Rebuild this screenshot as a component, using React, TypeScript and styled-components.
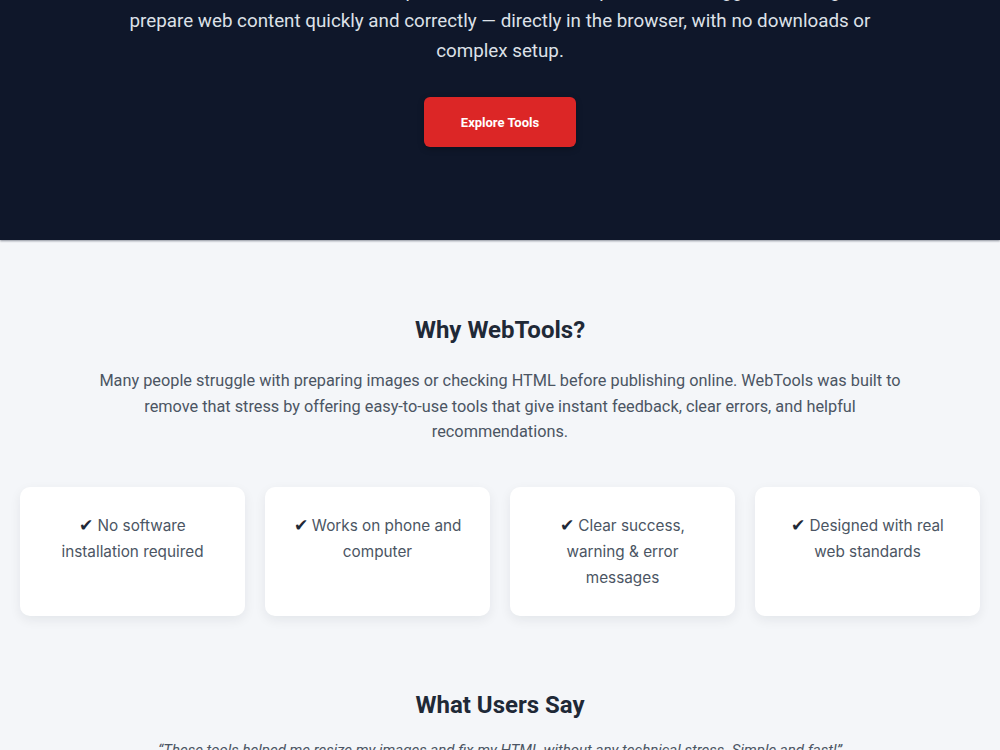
import React from "react";
import styled, { createGlobalStyle } from "styled-components";

const GlobalStyle = createGlobalStyle`
  html, body {
    margin: 0;
    padding: 0;
    background: #f4f6f9;
    font-family: Roboto, "Liberation Sans", Arial, sans-serif;
    overflow: hidden;
  }
  * { box-sizing: border-box; }
`;

const Hero = styled.header`
  background: #0f172a;
  text-align: center;
  padding: 0 20px 93px;
  box-shadow: 0 1px 2px rgba(15, 23, 42, 0.45);
  position: relative;
`;

const HeroText = styled.p`
  margin: -24px auto 31px;
  max-width: 790px;
  font-size: 18.8px;
  line-height: 30px;
  color: #dde1e8;
`;

const PrimaryButton = styled.a`
  display: inline-flex;
  align-items: center;
  justify-content: center;
  width: 152px;
  height: 50px;
  border-radius: 6px;
  background: #dc2626;
  color: #fff;
  font-size: 13px;
  font-weight: 700;
  text-decoration: none;
  box-shadow: 0 2px 6px rgba(0, 0, 0, 0.25);
`;

const Section = styled.section<{ $top: number }>`
  padding: ${(p) => p.$top}px 20px 0;
  text-align: center;
`;

const SectionTitle = styled.h2`
  margin: 0;
  font-size: 24px;
  line-height: 32px;
  font-weight: 700;
  color: #1f2937;
`;

const Lead = styled.p`
  margin: 22px auto 0;
  max-width: 830px;
  font-size: 16.3px;
  line-height: 25.5px;
  color: #4b5563;
`;

const CardGrid = styled.div`
  display: grid;
  grid-template-columns: repeat(4, 1fr);
  gap: 20px;
  margin-top: 42px;
`;

const Card = styled.div`
  background: #ffffff;
  border-radius: 10px;
  padding: 25px 24px;
  min-height: 128px;
  box-shadow: 0 4px 12px rgba(15, 23, 42, 0.07);
  font-family: Inter, Roboto, sans-serif;
  font-size: 15.3px;
  line-height: 26px;
  color: #4b5563;
`;

const Tick = styled.span`
  color: #1f2937;
  font-size: 1.08em;
`;

const Quote = styled.p`
  margin: 16px auto 0;
  max-width: 700px;
  font-size: 15px;
  line-height: 26px;
  font-style: italic;
  color: #4b5563;
`;

const features = [
  "No software installation required",
  "Works on phone and computer",
  "Clear success, warning & error messages",
  "Designed with real web standards",
];

export default function App() {
  return (
    <>
      <GlobalStyle />
      <Hero>
        <HeroText>
          WebTools is a free collection of simple online tools that help students, bloggers and beginners
          prepare web content quickly and correctly — directly in the browser, with no downloads or
          complex setup.
        </HeroText>
        <PrimaryButton href="#tools">Explore Tools</PrimaryButton>
      </Hero>

      <Section $top={74}>
        <SectionTitle>Why WebTools?</SectionTitle>
        <Lead>
          Many people struggle with preparing images or checking HTML before publishing online. WebTools was
          built to remove that stress by offering easy-to-use tools that give instant feedback, clear errors,
          and helpful recommendations.
        </Lead>
        <CardGrid>
          {features.map((f) => (
            <Card key={f}>
              <Tick>✔</Tick> {f}
            </Card>
          ))}
        </CardGrid>
      </Section>

      <Section $top={73}>
        <SectionTitle>What Users Say</SectionTitle>
        <Quote>
          “These tools helped me resize my images and fix my HTML without any technical stress. Simple and fast!”
        </Quote>
      </Section>
    </>
  );
}
